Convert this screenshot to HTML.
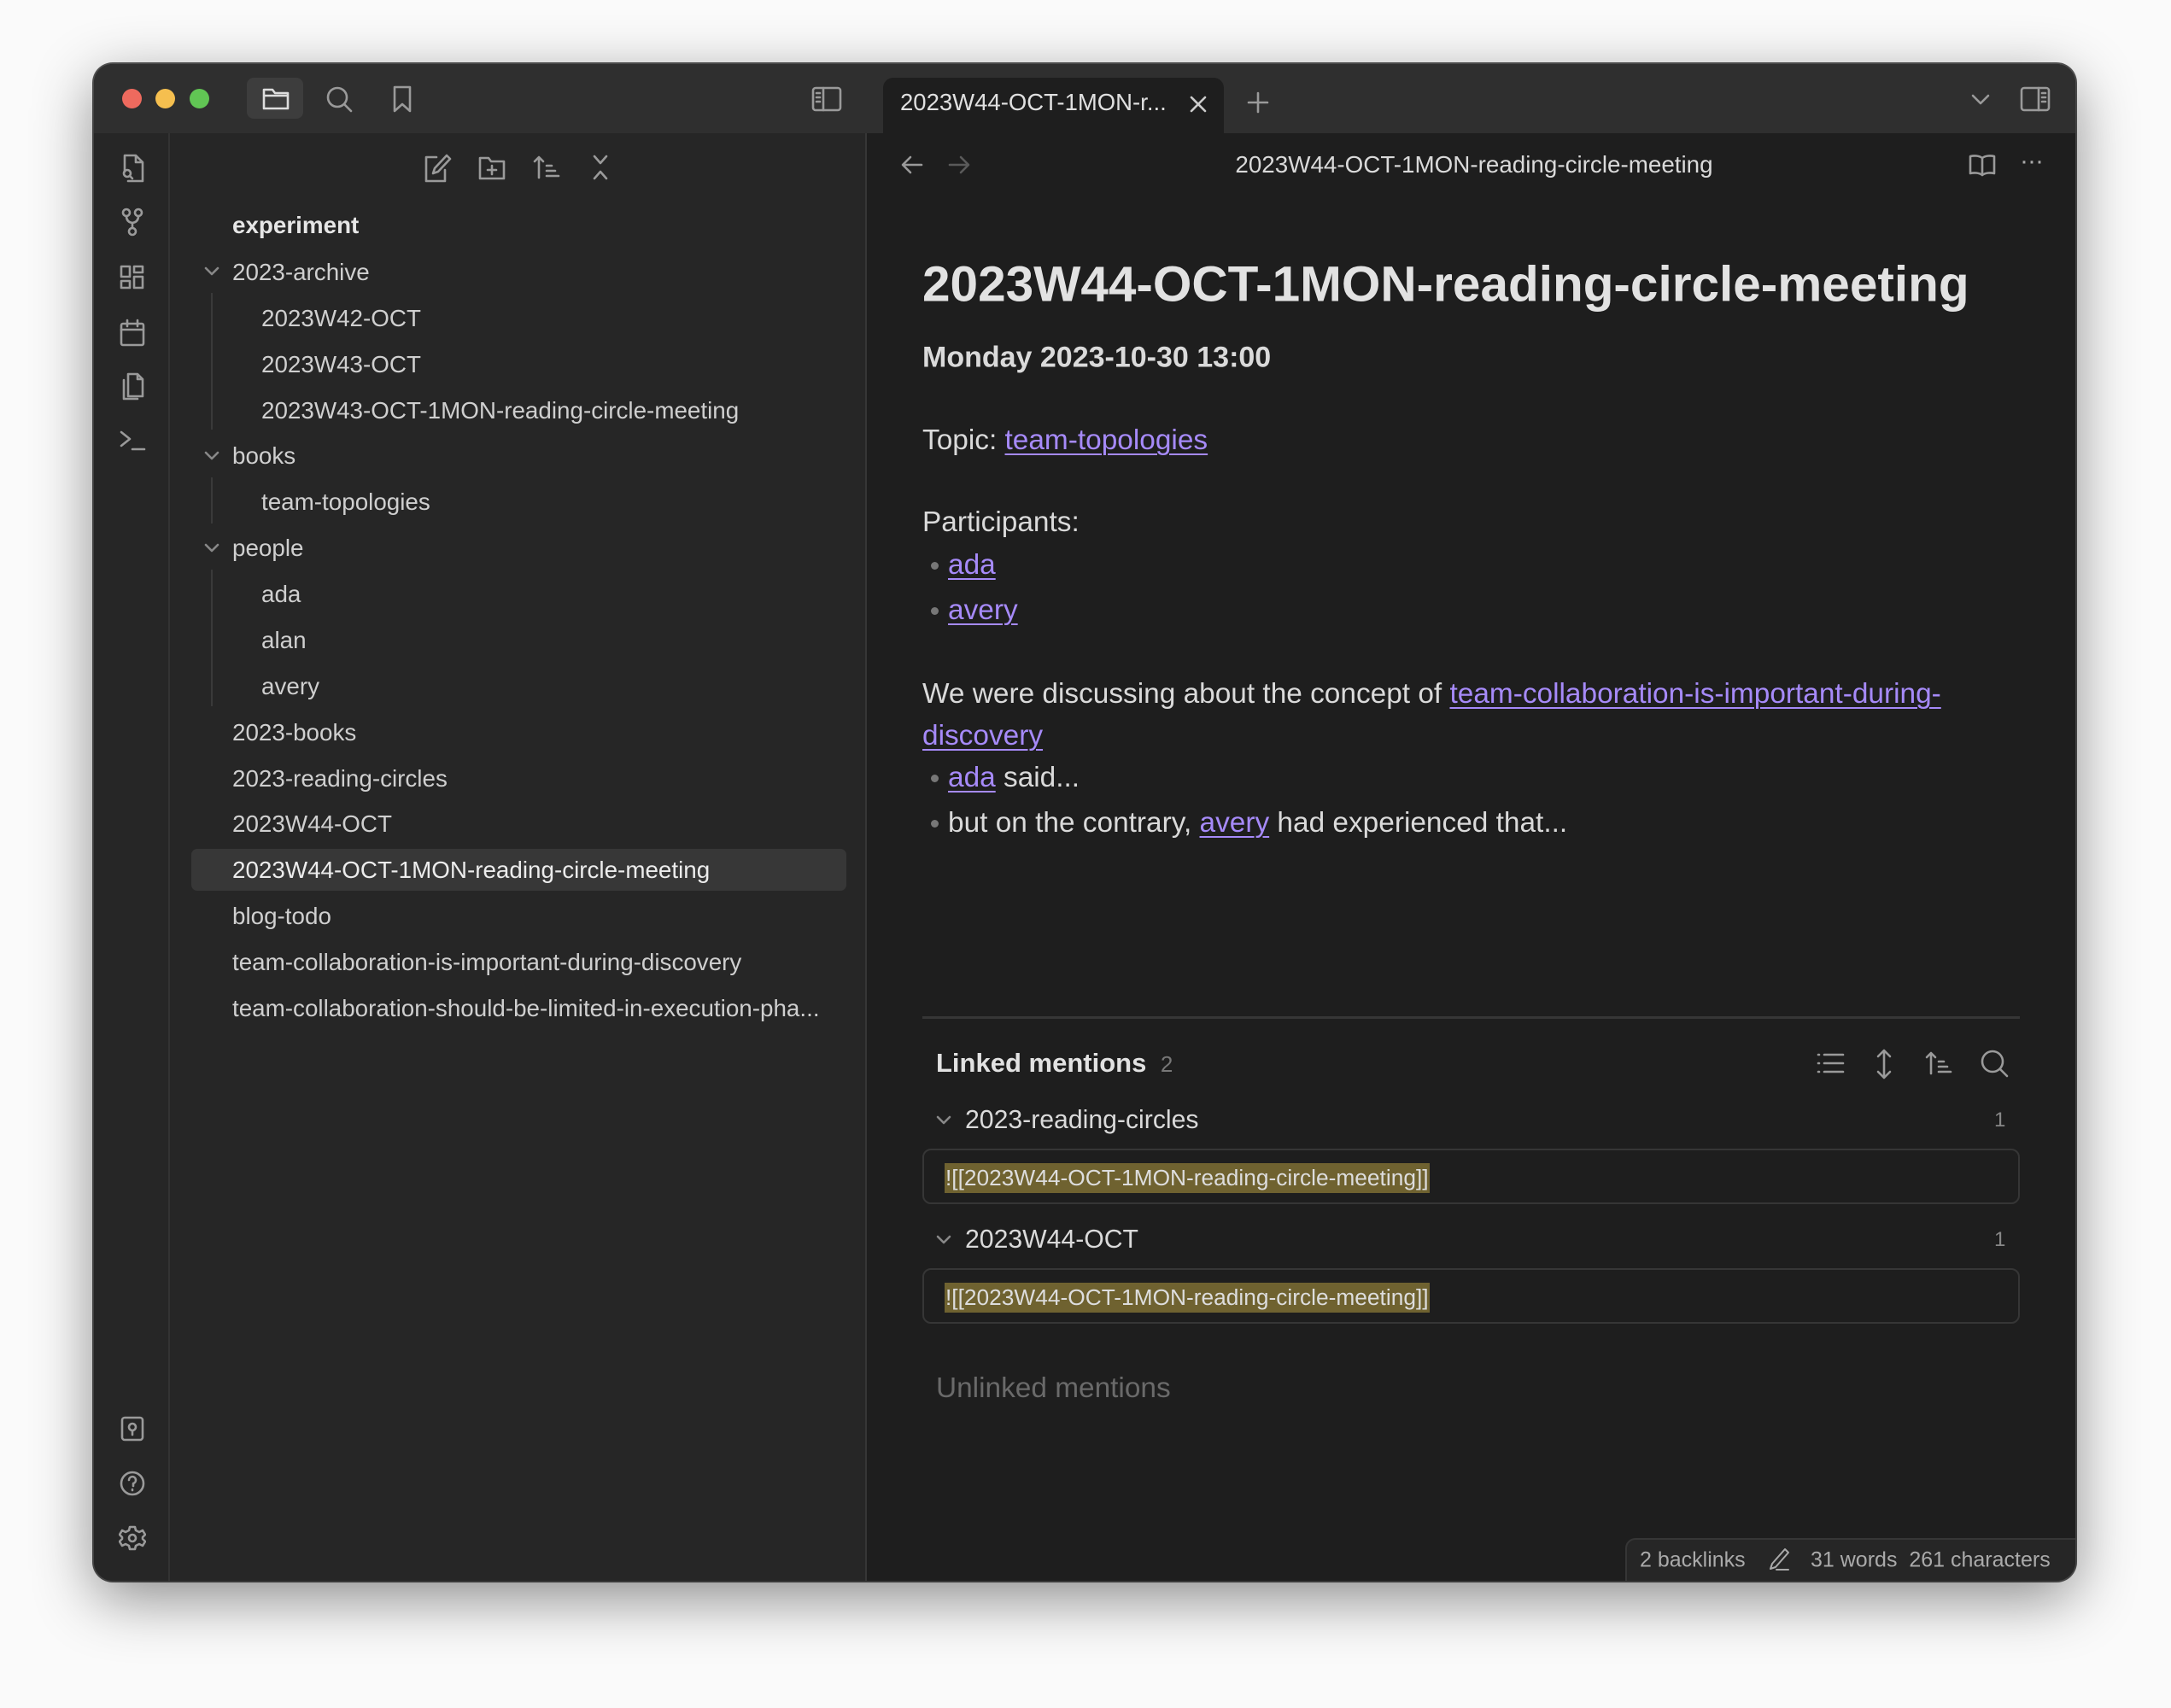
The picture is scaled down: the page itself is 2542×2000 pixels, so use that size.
<!DOCTYPE html>
<html><head><meta charset="utf-8"><style>
*{margin:0;padding:0;box-sizing:border-box}
body{width:2542px;height:2000px;background:#fafafa;font-family:"Liberation Sans",sans-serif;position:relative;overflow:hidden}
.win{position:absolute;left:110px;top:75px;width:2320px;height:1776px;border-radius:22px;overflow:hidden;background:#1e1e1e;box-shadow:0 20px 70px rgba(0,0,0,.45),0 0 0 2px #555}
.abs{position:absolute}
.tb{left:0;top:0;width:2320px;height:81px;background:#2f2f2f}
.rib{left:0;top:81px;width:89px;height:1695px;background:#262626;border-right:2px solid #333}
.side{left:89px;top:81px;width:816px;height:1695px;background:#262626;border-right:2px solid #363636}
.t{position:absolute;white-space:nowrap;color:#dadada}
.ft{font-size:27.8px;color:#cfcfcf;transform:translateY(-50%)}
svg.i{position:absolute;fill:none;stroke:#9a9a9a;stroke-width:2.6;stroke-linecap:round;stroke-linejoin:round}
a{color:#a68af9;text-decoration:underline;text-underline-offset:5px;text-decoration-thickness:2px}
.mc{font-size:33.4px;color:#dadada;transform:translateY(-50%)}
.dot{position:absolute;width:9px;height:9px;border-radius:50%;background:#777}
.box{position:absolute;left:970px;width:1285px;height:65px;border:2px solid #363636;border-radius:10px}
.hl{position:absolute;left:24px;top:15px;background:#6f6230;color:#ddd;font-size:26.3px;padding:2px 1px}
</style></head><body>
<div class="win">
<div class="abs tb"></div>
<div class="abs" style="left:33px;top:29px;width:23px;height:23px;border-radius:50%;background:#ee6a5e"></div>
<div class="abs" style="left:72px;top:29px;width:23px;height:23px;border-radius:50%;background:#f5bf4f"></div>
<div class="abs" style="left:112px;top:29px;width:23px;height:23px;border-radius:50%;background:#61c554"></div>
<div class="abs" style="left:179px;top:16px;width:66px;height:48px;border-radius:8px;background:#3d3d3d"></div>
<svg class="i" style="left:196px;top:24px;stroke:#ddd" width="34" height="32" viewBox="0 0 34 32"><path d="M3 6h10l3 4h15v18H3z M3 13h28"/></svg>
<svg class="i" style="left:270px;top:24px" width="34" height="34" viewBox="0 0 34 34"><circle cx="15" cy="15" r="11"/><path d="M23 23l8 8"/></svg>
<svg class="i" style="left:348px;top:24px" width="26" height="34" viewBox="0 0 26 34"><path d="M4 3h18v28l-9-8-9 8z"/></svg>
<svg class="i" style="left:840px;top:26px" width="36" height="30" viewBox="0 0 36 30"><rect x="2" y="2" width="32" height="26" rx="3"/><path d="M14 2v26M6 8h4M6 13h4M6 18h4"/></svg>
<div class="abs" style="left:924px;top:16px;width:399px;height:66px;background:#1e1e1e;border-radius:12px 12px 0 0"></div>
<div class="t" style="left:944px;top:29px;font-size:27.5px;color:#e0e0e0">2023W44-OCT-1MON-r...</div>
<svg class="i" style="left:1282px;top:36px;stroke:#ccc" width="22" height="22" viewBox="0 0 22 22"><path d="M3 3l16 16M19 3L3 19"/></svg>
<svg class="i" style="left:1350px;top:32px" width="26" height="26" viewBox="0 0 26 26"><path d="M13 2v22M2 13h22"/></svg>
<svg class="i" style="left:2197px;top:32px" width="24" height="18" viewBox="0 0 24 18"><path d="M3 5l9 9 9-9"/></svg>
<svg class="i" style="left:2255px;top:26px" width="36" height="30" viewBox="0 0 36 30"><rect x="2" y="2" width="32" height="26" rx="3"/><path d="M22 2v26M26 8h4M26 13h4M26 18h4"/></svg>

<div class="abs rib"></div>
<svg class="i" style="left:30px;top:104px" width="30" height="36" viewBox="0 0 30 36"><path d="M6 22V3h13l8 8v22H10M19 3v8h8"/><circle cx="9" cy="24" r="4"/><path d="M12 27l3 3"/></svg>
<svg class="i" style="left:29px;top:168px" width="32" height="34" viewBox="0 0 32 34"><circle cx="9" cy="6" r="4"/><circle cx="23" cy="6" r="4"/><circle cx="16" cy="28" r="4"/><path d="M9 10q0 7 7 8 7-1 7-8M16 18v6"/></svg>
<svg class="i" style="left:29px;top:234px" width="32" height="32" viewBox="0 0 32 32"><rect x="3" y="3" width="10" height="12"/><rect x="18" y="3" width="10" height="7"/><rect x="3" y="20" width="10" height="8"/><rect x="18" y="15" width="10" height="13"/></svg>
<svg class="i" style="left:29px;top:298px" width="32" height="34" viewBox="0 0 32 34"><rect x="3" y="6" width="26" height="25" rx="2"/><path d="M3 13h26M10 2v7M22 2v7"/></svg>
<svg class="i" style="left:30px;top:360px" width="30" height="36" viewBox="0 0 30 36"><path d="M10 3h11l6 6v20H10zM21 3v6h6M5 10v22h16"/></svg>
<svg class="i" style="left:29px;top:427px" width="34" height="28" viewBox="0 0 34 28"><path d="M3 4l10 8-10 8M16 24h14"/></svg>
<svg class="i" style="left:30px;top:1582px" width="30" height="32" viewBox="0 0 30 32"><rect x="3" y="3" width="24" height="26" rx="3"/><circle cx="15" cy="14" r="4"/><path d="M15 18v5"/></svg>
<svg class="i" style="left:29px;top:1646px" width="32" height="32" viewBox="0 0 32 32"><circle cx="16" cy="16" r="13"/><path d="M12 12a4 4 0 1 1 5 4v3M16 23v1"/></svg>
<svg class="i" style="left:29px;top:1710px" width="32" height="32" viewBox="0 0 32 32"><path d="M13 3h6l1 4 4 2 4-2 3 5-3 3v2l3 3-3 5-4-2-4 2-1 4h-6l-1-4-4-2-4 2-3-5 3-3v-2l-3-3 3-5 4 2 4-2z"/><circle cx="16" cy="16" r="4"/></svg>

<div class="abs side"></div>
<svg class="i" style="left:385px;top:104px" width="34" height="36" viewBox="0 0 34 36"><path d="M16 5H4v28h22V20M28 3l4 4-14 15-6 2 2-6z"/></svg>
<svg class="i" style="left:449px;top:106px" width="34" height="32" viewBox="0 0 34 32"><path d="M3 4h10l3 4h15v20H3zM17 13v10M12 18h10"/></svg>
<svg class="i" style="left:513px;top:105px" width="34" height="32" viewBox="0 0 34 32"><path d="M8 28V4M3 9l5-5 5 5M17 14h6M17 20h10M17 26h14"/></svg>
<svg class="i" style="left:581px;top:105px" width="24" height="32" viewBox="0 0 24 32"><path d="M5 3l7 8 7-8M5 29l7-8 7 8"/></svg>

<div class="t ft" style="left:162px;top:189px;font-weight:bold;color:#e6e6e6">experiment</div>
<svg class="i" style="left:128px;top:236px;stroke:#888" width="20" height="14" viewBox="0 0 20 14"><path d="M3 3l7 7 7-7"/></svg>
<div class="t ft" style="left:162px;top:244px">2023-archive</div>
<div class="abs" style="left:137px;top:268px;width:2px;height:160px;background:#3a3a3a"></div>
<div class="t ft" style="left:196px;top:298px">2023W42-OCT</div>
<div class="t ft" style="left:196px;top:352px">2023W43-OCT</div>
<div class="t ft" style="left:196px;top:406px">2023W43-OCT-1MON-reading-circle-meeting</div>
<svg class="i" style="left:128px;top:452px;stroke:#888" width="20" height="14" viewBox="0 0 20 14"><path d="M3 3l7 7 7-7"/></svg>
<div class="t ft" style="left:162px;top:459px">books</div>
<div class="abs" style="left:137px;top:484px;width:2px;height:54px;background:#3a3a3a"></div>
<div class="t ft" style="left:196px;top:513px">team-topologies</div>
<svg class="i" style="left:128px;top:560px;stroke:#888" width="20" height="14" viewBox="0 0 20 14"><path d="M3 3l7 7 7-7"/></svg>
<div class="t ft" style="left:162px;top:567px">people</div>
<div class="abs" style="left:137px;top:592px;width:2px;height:160px;background:#3a3a3a"></div>
<div class="t ft" style="left:196px;top:621px">ada</div>
<div class="t ft" style="left:196px;top:675px">alan</div>
<div class="t ft" style="left:196px;top:729px">avery</div>
<div class="t ft" style="left:162px;top:783px">2023-books</div>
<div class="t ft" style="left:162px;top:837px">2023-reading-circles</div>
<div class="t ft" style="left:162px;top:890px">2023W44-OCT</div>
<div class="abs" style="left:114px;top:919px;width:767px;height:49px;border-radius:7px;background:#373737"></div>
<div class="t ft" style="left:162px;top:944px;color:#ececec">2023W44-OCT-1MON-reading-circle-meeting</div>
<div class="t ft" style="left:162px;top:998px">blog-todo</div>
<div class="t ft" style="left:162px;top:1052px">team-collaboration-is-important-during-discovery</div>
<div class="t ft" style="left:162px;top:1106px">team-collaboration-should-be-limited-in-execution-pha...</div>

<svg class="i" style="left:944px;top:106px" width="28" height="24" viewBox="0 0 28 24"><path d="M25 12H4M12 3l-9 9 9 9"/></svg>
<svg class="i" style="left:999px;top:106px;stroke:#5a5a5a" width="28" height="24" viewBox="0 0 28 24"><path d="M3 12h21M16 3l9 9-9 9"/></svg>
<div class="t" style="left:1616px;top:118px;transform:translate(-50%,-50%);font-size:27.8px;color:#dadada">2023W44-OCT-1MON-reading-circle-meeting</div>
<svg class="i" style="left:2194px;top:104px" width="34" height="28" viewBox="0 0 34 28"><path d="M17 6v20M17 6C13 3 7 3 3 4v20c4-1 10-1 14 2 4-3 10-3 14-2V4c-4-1-10-1-14 2"/></svg>
<div class="t" style="left:2255px;top:97px;font-size:30px;color:#aaa;letter-spacing:-1px">···</div>

<div class="t" style="left:970px;top:258px;transform:translateY(-50%);font-size:58.5px;font-weight:bold;color:#e2e2e2">2023W44-OCT-1MON-reading-circle-meeting</div>
<div class="t mc" style="left:970px;top:344px;font-weight:bold;font-size:34px">Monday 2023-10-30 13:00</div>
<div class="t mc" style="left:970px;top:441px">Topic: <a>team-topologies</a></div>
<div class="t mc" style="left:970px;top:537px">Participants:</div>
<div class="dot" style="left:980px;top:583px"></div>
<div class="t mc" style="left:1000px;top:587px"><a>ada</a></div>
<div class="dot" style="left:980px;top:636px"></div>
<div class="t mc" style="left:1000px;top:640px"><a>avery</a></div>
<div class="t mc" style="left:970px;top:738px">We were discussing about the concept of <a>team-collaboration-is-important-during-</a></div>
<div class="t mc" style="left:970px;top:787px"><a>discovery</a></div>
<div class="dot" style="left:980px;top:832px"></div>
<div class="t mc" style="left:1000px;top:836px"><a>ada</a> said...</div>
<div class="dot" style="left:980px;top:885px"></div>
<div class="t mc" style="left:1000px;top:889px">but on the contrary, <a>avery</a> had experienced that...</div>

<div class="abs" style="left:970px;top:1115px;width:1285px;height:3px;background:#363636"></div>
<div class="t mc" style="left:986px;top:1170px;font-weight:bold;color:#e2e2e2;font-size:31px">Linked mentions <span style="font-weight:normal;color:#777;font-size:26px;margin-left:8px">2</span></div>
<svg class="i" style="left:2016px;top:1156px" width="34" height="28" viewBox="0 0 34 28"><path d="M10 4h22M10 14h22M10 24h22M3 4h1M3 14h1M3 24h1"/></svg>
<svg class="i" style="left:2084px;top:1152px" width="24" height="38" viewBox="0 0 24 38"><path d="M12 3v32M5 10l7-7 7 7M5 28l7 7 7-7"/></svg>
<svg class="i" style="left:2143px;top:1154px" width="34" height="32" viewBox="0 0 34 32"><path d="M8 28V4M3 9l5-5 5 5M17 14h6M17 20h10M17 26h14"/></svg>
<svg class="i" style="left:2207px;top:1152px" width="36" height="36" viewBox="0 0 36 36"><circle cx="16" cy="16" r="12"/><path d="M25 25l8 8"/></svg>

<svg class="i" style="left:985px;top:1230px;stroke:#888" width="20" height="14" viewBox="0 0 20 14"><path d="M3 3l7 7 7-7"/></svg>
<div class="t mc" style="left:1020px;top:1237px;font-size:30.2px">2023-reading-circles</div>
<div class="t mc" style="left:2225px;top:1237px;font-size:24px;color:#888">1</div>
<div class="box" style="top:1270px"><div class="hl">![[2023W44-OCT-1MON-reading-circle-meeting]]</div></div>

<svg class="i" style="left:985px;top:1370px;stroke:#888" width="20" height="14" viewBox="0 0 20 14"><path d="M3 3l7 7 7-7"/></svg>
<div class="t mc" style="left:1020px;top:1377px;font-size:30.2px">2023W44-OCT</div>
<div class="t mc" style="left:2225px;top:1377px;font-size:24px;color:#888">1</div>
<div class="box" style="top:1410px"><div class="hl">![[2023W44-OCT-1MON-reading-circle-meeting]]</div></div>

<div class="t mc" style="left:986px;top:1551px;color:#6a6a6a">Unlinked mentions</div>

<div class="abs" style="left:1793px;top:1726px;width:540px;height:60px;background:#262626;border:2px solid #363636;border-radius:12px 0 0 0"></div>
<div class="t" style="left:1810px;top:1752px;transform:translateY(-50%);font-size:25px;color:#aaa">2 backlinks</div>
<svg class="i" style="left:1960px;top:1736px;stroke:#aaa;stroke-width:2" width="28" height="30" viewBox="0 0 28 30"><path d="M20 3l4 4L9 24l-6 2 2-6zM10 27h14"/></svg>
<div class="t" style="left:2010px;top:1752px;transform:translateY(-50%);font-size:25px;color:#aaa">31 words&nbsp; 261 characters</div>
</div>
</body></html>
